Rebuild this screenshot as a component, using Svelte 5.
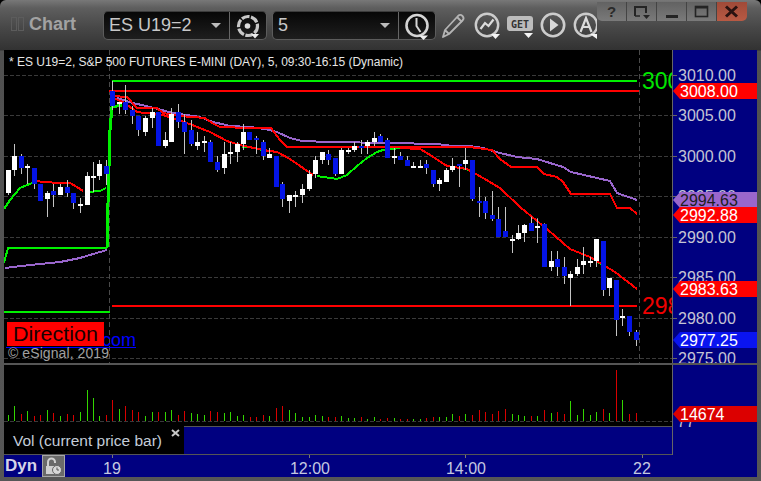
<script>
  const conv = (rows, x0, y0) =>
    rows.map(([x, wt, bt, bb, wb, k]) => ({
      x: Math.round(x0 + x / 3),
      wt: y0 + wt / 3,
      bt: Math.round(y0 + bt / 3),
      bb: Math.round(y0 + bb / 3),
      wb: y0 + wb / 3,
      k
    }));
  const candles = [
    ...conv([
      [25,300,300,370,375,'w'],[43,222,258,300,318,'w'],[64,252,258,294,312,'b'],[82,282,288,294,342,'w'],
      [103,294,294,342,357,'b'],[121,342,342,393,393,'b'],[142,363,369,387,441,'w'],[160,342,363,375,411,'b'],
      [181,342,351,375,375,'w'],[202,330,351,369,381,'b'],[220,369,369,399,417,'b'],[241,384,402,408,429,'w'],
      [260,306,318,405,405,'w'],[280,276,318,324,366,'w'],[298,270,282,318,330,'w'],[319,270,288,312,345,'b'],
      [337,33,63,108,120,'b'],[358,96,96,102,132,'w'],[376,45,96,120,132,'b'],[397,108,120,138,162,'b'],
      [415,138,138,180,198,'b'],[436,138,144,186,198,'w'],[457,114,126,144,174,'w'],[475,126,126,228,228,'b'],
      [496,186,210,228,234,'w'],[514,114,132,216,216,'w'],[535,102,126,156,174,'b'],[553,132,156,186,252,'b'],
      [574,150,180,222,228,'b'],[592,186,216,228,240,'w'],[613,198,213,219,246,'w'],[631,210,216,276,276,'b'],
      [652,258,276,300,306,'b'],[673,216,252,294,312,'w'],[691,216,246,252,282,'w'],[712,216,222,246,276,'w'],
      [730,162,186,222,240,'w'],[748,186,186,210,210,'b']
    ], 0, 70),
    ...conv([
      [18,198,204,210,252,'b'],[40,210,216,258,270,'b'],[58,234,252,264,264,'w'],[79,258,258,351,351,'b'],
      [97,336,342,387,411,'b'],[118,375,375,393,429,'w'],[136,363,375,381,411,'w'],[157,342,357,375,399,'w'],
      [178,300,312,357,363,'w'],[196,258,270,312,324,'w'],[217,246,246,270,282,'w'],[235,240,252,270,285,'b'],
      [256,264,264,312,318,'b'],[274,234,240,312,312,'w'],[295,234,240,246,252,'w'],[313,216,228,240,246,'w'],
      [334,210,228,234,252,'b'],[352,210,216,228,252,'w'],[373,186,204,216,228,'w'],[391,192,198,216,216,'b'],
      [412,204,210,264,264,'b'],[433,234,258,264,282,'w'],[451,246,258,270,270,'b'],[472,258,270,288,288,'b'],
      [490,276,288,294,294,'w'],[511,270,288,294,294,'w'],[529,270,282,294,312,'b'],[550,300,300,342,351,'b'],
      [568,324,330,342,363,'w'],[589,294,300,336,336,'w'],[607,264,288,300,306,'w'],[628,282,282,288,351,'b'],
      [646,234,270,282,300,'w'],[667,270,270,387,393,'b'],[688,351,393,399,441,'b'],[706,381,393,429,447,'b'],
      [727,363,435,447,453,'b'],[745,411,447,501,501,'b']
    ], 250, 70),
    ...conv([
      [15,-54,18,36,36,'b'],[35,30,42,48,84,'w'],[55,0,24,42,45,'w'],[73,-3,0,24,51,'w'],[94,-25,-5,18,18,'b'],
      [112,-20,3,9,54,'w'],[133,-5,-3,126,126,'b'],[154,78,108,126,138,'w'],[172,78,102,126,153,'b'],
      [193,96,126,153,177,'b'],[211,138,147,159,243,'w'],[232,102,126,147,153,'w'],[250,66,108,120,147,'w'],
      [271,96,108,114,126,'w'],[289,42,42,108,126,'w'],[310,48,48,195,213,'b'],[328,159,159,190,213,'w'],
      [349,165,165,285,333,'b'],[367,252,273,279,303,'w'],[388,273,273,321,333,'b'],[409,315,321,345,363,'b']
    ], 500, 225)
  ];

  const volRows = (rows, x0) => rows.map(([x, h, k]) => ({ x: Math.round(x0 + x / 3), h: h / 3, k }));
  const vols = [
    ...volRows([
      [25,18,'g'],[43,45,'g'],[64,21,'r'],[82,30,'g'],[103,15,'r'],[121,18,'r'],[142,33,'g'],[160,24,'r'],
      [181,15,'g'],[202,21,'r'],[220,18,'r'],[241,27,'g'],[260,93,'g'],[280,69,'g'],[298,15,'g'],[319,18,'r'],
      [337,63,'r'],[358,36,'g'],[376,45,'r'],[397,33,'r'],[415,27,'r'],[436,15,'g'],[457,27,'g'],[475,27,'r'],
      [496,27,'g'],[514,33,'g'],[535,18,'r'],[553,30,'r'],[574,24,'g'],[592,21,'g'],[613,18,'g'],[631,30,'r'],
      [652,27,'r'],[673,24,'g'],[691,27,'g'],[712,15,'g'],[730,18,'g']
    ], 0),
    ...volRows([
      [0,12,'r'],[18,12,'r'],[40,18,'r'],[58,15,'g'],[79,39,'r'],[97,45,'r'],[118,33,'g'],[136,24,'g'],[157,12,'g'],
      [178,12,'g'],[196,18,'g'],[217,15,'g'],[235,12,'r'],[256,12,'r'],[274,15,'g'],[295,9,'g'],[313,9,'g'],
      [334,12,'r'],[352,6,'g'],[373,12,'g'],[391,6,'r'],[412,9,'r'],[433,9,'g'],[451,6,'r'],[472,6,'r'],[490,6,'g'],
      [511,6,'g'],[529,9,'r'],[550,12,'r'],[568,12,'g'],[589,12,'g'],[607,21,'g'],[628,15,'r'],[646,21,'g'],
      [667,18,'r'],[688,33,'r'],[706,27,'r'],[727,21,'r'],[745,30,'r']
    ], 250),
    ...volRows([
      [16,36,'r'],[35,21,'g'],[55,18,'g'],[73,15,'g'],[94,15,'r'],[112,15,'g'],[133,33,'r'],[154,24,'g'],[172,27,'r'],
      [193,21,'r'],[211,60,'g'],[232,18,'g'],[250,36,'g'],[271,18,'g'],[289,27,'g'],[310,36,'r'],[328,24,'g'],
      [349,153,'r'],[367,63,'g'],[388,21,'r'],[409,24,'r']
    ], 500)
  ];

  const grid = [75, 115, 156, 196, 237, 277, 318, 358];
  const axis = [
    ['3010.00', 75], ['3005.00', 115], ['3000.00', 156], ['2995.00', 196],
    ['2990.00', 237], ['2985.00', 277], ['2980.00', 318], ['2975.00', 358]
  ];
  const tags = [
    { t: '3008.00', y: 91, c: '#ff0000', f: '#ffffff' },
    { t: '2994.63', y: 200, c: '#9966cc', f: '#1c1c1c' },
    { t: '2992.88', y: 215, c: '#ff0000', f: '#ffffff' },
    { t: '2983.63', y: 289, c: '#ff0000', f: '#ffffff' },
    { t: '2977.25', y: 340, c: '#0a14f0', f: '#ffffff' }
  ];
  const tagPts = (y) => `673,${y} 680,${y - 8} 757,${y - 8} 757,${y + 8} 680,${y + 8}`;

  const purpleA = '5,268 30,265 60,262 80,258 100,252 107,250';
  const purpleB = '117,98 133,103 150,107 173,113 200,117 213,122 230,126 250,127 265,129 277,132 290,138 302,141 330,142 390,143 437,144 453,146 470,146 483,148 500,153 517,157 537,159 563,167 571,172 610,181 617,193 637,200';
  const greenFlat = '4,263 8,248 107,248';
  const greenSteep = '107,248 108,203 110,130 112,107 122,105';
  const greenPieces = [
    '4,209 10,200 20,188 32,183',
    '88,192 100,191 106,188',
    '242,147 250,147 262,150',
    '317,176 337,179 347,175 357,166 367,158 377,152 383,150 400,148',
    '463,169 471,170',
    '597,262 601,264'
  ];
  const redTop = '113,96 127,97 137,108 157,108 163,113 180,116 205,118 212,123 220,127 250,128 271,128 280,140 287,147 393,147 470,147 477,148 492,150 500,159 511,167 537,167 544,174 557,177 563,182 571,194 610,194 617,208 630,208 637,214';
  const redLow = '113,98 123,102 137,112 163,115 187,123 210,132 227,141 240,145 263,150 277,152 290,159 313,175';
  const redLow2 = '400,148 420,149 427,153 447,166 467,169 483,178 500,188 520,207 548,230 570,249 590,257 615,272 637,289';
  const redLeft = '32,181 47,182 57,183 70,183 77,187 83,191';
</script>

<div class="window">
  <header class="titlebar">
    <div class="brand">
      <span class="grip"></span><span class="grip"></span>
      <span class="brand-name">Chart</span>
    </div>

    <div class="pill">
      <span class="pill-text">ES U19=2</span>
      <span class="caret"></span>
      <span class="pill-btn">
        <svg width="30" height="30" viewBox="0 0 30 30" aria-hidden="true">
          <circle cx="15" cy="15" r="9.5" fill="none" stroke="#c8c8c8" stroke-width="3.2" stroke-dasharray="8 1.5"/>
          <circle cx="14.500" cy="15" r="2.800" fill="#dcdcdc"/>
          <path d="M18 23h8l-4 4.500z" fill="#ececec"/>
        </svg>
      </span>
    </div>

    <div class="pill second">
      <span class="pill-text">5</span>
      <span class="caret"></span>
      <span class="pill-btn">
        <svg width="30" height="30" viewBox="0 0 30 30" aria-hidden="true">
          <circle cx="15" cy="14.500" r="10.500" fill="none" stroke="#d4d4d4" stroke-width="2.600"/>
          <path d="M14.500 7v8l4 6" fill="none" stroke="#d4d4d4" stroke-width="2"/>
          <path d="M17 24.500h9l-4.500 4.500z" fill="#f0f0f0"/>
        </svg>
      </span>
    </div>

    <div class="tools">
      <svg width="26" height="28" viewBox="0 0 26 28" aria-hidden="true">
        <path d="M2 26l2-7L17 5c1.500-1.500 3-1.500 4.500 0s1.500 3 0 4.500L8 23z M4 19l4 4" fill="none" stroke="#b4b4b4" stroke-width="1.800" stroke-linejoin="round"/>
        <path d="M16 6l5 5" stroke="#b4b4b4" stroke-width="1.800"/>
      </svg>
      <svg width="26" height="28" viewBox="0 0 26 28" aria-hidden="true">
        <circle cx="13" cy="14" r="11.200" fill="none" stroke="#cccccc" stroke-width="2.400"/>
        <path d="M6.500 18l4.500-6 3.500 3 5-6.500" fill="none" stroke="#dcdcdc" stroke-width="2.200"/>
        <path d="M17 23h9l-4.500 5z" fill="#f4f4f4"/>
      </svg>
      <svg width="26" height="28" viewBox="0 0 26 28" aria-hidden="true">
        <rect x="0" y="5" width="26" height="15" rx="3" fill="#bcbcbc"/>
        <text x="13" y="16.500" class="get">GET</text>
        <path d="M17 22h9l-4.500 5z" fill="#f4f4f4"/>
      </svg>
      <svg width="26" height="28" viewBox="0 0 26 28" aria-hidden="true">
        <circle cx="13" cy="14" r="11.200" fill="none" stroke="#cccccc" stroke-width="2.600"/>
        <path d="M10 7.500l8.500 6.500-8.500 6.500z" fill="#d8d8d8"/>
      </svg>
      <svg width="24" height="28" viewBox="0 0 24 28" aria-hidden="true">
        <circle cx="13" cy="14" r="11.200" fill="none" stroke="#cccccc" stroke-width="2.400"/>
        <path d="M7.500 21l5.500-14 5.500 14M9.500 16h7" fill="none" stroke="#dcdcdc" stroke-width="2.200"/>
        <path d="M17 23h7v5z" fill="#f4f4f4"/>
      </svg>
    </div>

    <div class="winctl">
      <span class="wbtn q">?</span>
      <span class="wbtn">
        <svg width="20" height="16" viewBox="0 0 20 16" aria-hidden="true">
          <path d="M3 12V3h11v6" fill="none" stroke="#242424" stroke-width="2"/>
          <path d="M3 12h5" stroke="#242424" stroke-width="1.500"/>
          <path d="M11 11h7l-3.500 4z" fill="#242424"/>
        </svg>
      </span>
      <span class="wbtn">
        <svg width="20" height="16" viewBox="0 0 20 16" aria-hidden="true"><path d="M4 12.500h12" stroke="#242424" stroke-width="3"/></svg>
      </span>
      <span class="wbtn">
        <svg width="20" height="16" viewBox="0 0 20 16" aria-hidden="true"><rect x="3.500" y="2.500" width="12" height="10" fill="none" stroke="#242424" stroke-width="1.600"/><path d="M3.500 3.500h12" stroke="#242424" stroke-width="2"/></svg>
      </span>
      <span class="wbtn close">
        <svg width="20" height="16" viewBox="0 0 20 16" aria-hidden="true"><path d="M4 2.500l11 10M15 2.500l-11 10" stroke="#2a1210" stroke-width="3"/></svg>
      </span>
    </div>
  </header>

  <section class="row-plot">
    <div class="plot">
      <svg class="plot-svg" width="668" height="313" viewBox="4 50 668 313">
        {#each grid as y}
          <line x1="4" x2="672" y1={y + 0.5} y2={y + 0.5} class="gridline"/>
        {/each}
        <line x1="109.500" x2="109.500" y1="50" y2="363" class="vline"/>
        <line x1="639.500" x2="639.500" y1="50" y2="363" class="vline"/>

        <line x1="4" x2="110" y1="312" y2="312" stroke="#00f000" stroke-width="2"/>
        <line x1="112" x2="637" y1="81" y2="81" stroke="#00f000" stroke-width="2"/>
        <line x1="109" x2="639" y1="91" y2="91" stroke="#ff0000" stroke-width="2"/>
        <line x1="112" x2="637" y1="306" y2="306" stroke="#ff0000" stroke-width="2"/>

        <polyline points={purpleA} class="ma purple"/>
        <polyline points={purpleB} class="ma purple"/>
        <polyline points={greenFlat} class="ma green"/>
        <polyline points={greenSteep} class="ma green thick"/>
        {#each greenPieces as p}
          <polyline points={p} class="ma green"/>
        {/each}
        <polyline points={redLeft} class="ma red"/>
        <polyline points={redTop} class="ma red"/>
        <polyline points={redLow} class="ma red"/>
        <polyline points={redLow2} class="ma red"/>

        {#each candles as c}
          <line x1={c.x + 0.5} x2={c.x + 0.5} y1={c.wt} y2={c.wb} class="wick"/>
          <rect x={c.x - 2} y={c.bt} width="5" height={Math.max(c.bb - c.bt, 2)} fill={c.k === 'w' ? '#ffffff' : '#0414e6'}/>
        {/each}

        <text x="9" y="66" class="title-text" textLength="394" lengthAdjust="spacing">* ES U19=2, S&amp;P 500 FUTURES E-MINI (DAY), 5, 09:30-16:15 (Dynamic)</text>
        <text x="642" y="89" class="big green-t">300</text>
        <text x="642" y="314" class="big red-t">298</text>

        <text x="97" y="346" class="com">.com</text>
        <line x1="6" x2="136" y1="347.500" y2="347.500" stroke="#0000ff" stroke-width="1"/>
        <rect x="7" y="322" width="97" height="24" fill="#ff0000"/>
        <text x="13" y="341" class="direction" textLength="85" lengthAdjust="spacingAndGlyphs">Direction</text>
        <text x="8" y="358" class="copy" textLength="101" lengthAdjust="spacing">© eSignal, 2019</text>
      </svg>
    </div>
    <div class="axis">
      <svg width="84" height="313" viewBox="673 50 84 313">
        {#each axis as [t, y]}
          <line x1="673" x2="677" y1={y + 0.5} y2={y + 0.5} stroke="#666666"/>
          <text x="678" y={y + 6} class="axis-text">{t}</text>
        {/each}
        {#each tags as tag}
          <polygon points={tagPts(tag.y)} fill={tag.c}/>
          <text x="680" y={tag.y + 6} class="axis-text" style:fill={tag.f}>{tag.t}</text>
        {/each}
      </svg>
    </div>
  </section>

  <div class="sep"></div>

  <section class="row-vol">
    <div class="vol-col">
      <svg class="vol-svg" width="668" height="61" viewBox="4 365 668 61">
        <line x1="4" x2="672" y1="421.500" y2="421.500" class="gridline"/>
        {#each vols as v}
          <rect x={v.x} y={421 - v.h} width="1" height={v.h} fill={v.k === 'g' ? '#33d600' : '#d80000'}/>
        {/each}
      </svg>
      <div class="legend-row">
        <div class="legend">
          <span class="legend-text">Vol (current price bar)</span>
          <svg class="legend-x" width="9" height="8" viewBox="0 0 9 8" aria-hidden="true"><path d="M1 1l7 6M8 1L1 7" stroke="#c8c8c8" stroke-width="2"/></svg>
        </div>
        <div class="legend-blank"></div>
      </div>
    </div>
    <div class="vol-axis">
      <svg width="84" height="89" viewBox="673 365 84 89">
        <text x="677" y="427" class="axis-text">77</text>
        <polygon points={tagPts(414)} fill="#dc0000"/>
        <text x="680" y="420" class="axis-text tag-white">14674</text>
      </svg>
    </div>
  </section>

  <footer class="timebar">
    <span class="dyn">Dyn</span>
    <span class="lock">
      <svg width="21" height="21" viewBox="0 0 21 21" aria-hidden="true">
        <path d="M5 10V6a3.500 3.500 0 0 1 7 0v1" fill="none" stroke="#d0d0d0" stroke-width="2"/>
        <rect x="3" y="10" width="10" height="8" fill="#d0d0d0"/>
        <circle cx="14" cy="14" r="4.500" fill="#d8d8d8" stroke="#666" stroke-width="1"/>
        <path d="M14 11.500V14h2" fill="none" stroke="#555" stroke-width="1"/>
      </svg>
    </span>
    <svg class="time-svg" width="692" height="22" viewBox="65 455 692 22">
      <line x1="112.500" x2="112.500" y1="455" y2="458" stroke="#777"/>
      <line x1="309.500" x2="309.500" y1="455" y2="458" stroke="#777"/>
      <line x1="465.500" x2="465.500" y1="455" y2="458" stroke="#777"/>
      <line x1="642.500" x2="642.500" y1="455" y2="458" stroke="#777"/>
      <text x="112" y="474" class="time-text">19</text>
      <text x="310" y="474" class="time-text">12:00</text>
      <text x="466" y="474" class="time-text">14:00</text>
      <text x="642" y="474" class="time-text">22</text>
    </svg>
  </footer>
</div>

<style>
  :global(body) {
    margin: 0;
    background: #000;
  }
  .window {
    box-sizing: border-box;
    width: 761px;
    height: 481px;
    overflow: hidden;
    padding: 0 4px 4px;
    border-radius: 6px 6px 0 0;
    background: linear-gradient(#787878 0, #5e5e5e 8px, #474747 28px, #323232 50px, #505050 51px, #565656 100%);
    font-family: "Liberation Sans", Arial, sans-serif;
    display: flex;
    flex-direction: column;
  }
  svg {
    display: block;
  }
  .titlebar {
    height: 50px;
    flex: none;
    display: flex;
    align-items: flex-start;
  }
  .brand {
    width: 99px;
    height: 50px;
    flex: none;
    display: flex;
    align-items: center;
    padding: 0 0 0 7px;
    box-sizing: border-box;
    gap: 1px;
  }
  .grip {
    width: 6px;
    height: 14px;
    border: 1px solid #5c5c5c;
    box-sizing: border-box;
    margin-top: -2px;
  }
  .brand-name {
    margin: -2px 0 0 4px;
    font-size: 18px;
    font-weight: bold;
    color: #a2a2a2;
  }
  .pill {
    box-sizing: border-box;
    width: 164px;
    height: 29px;
    flex: none;
    margin: 11px 5px 0 0;
    display: flex;
    align-items: center;
    background: linear-gradient(#070707, #1e1e1e);
    border: 1px solid #5c5c5c;
    border-top-color: #3c3c3c;
    border-radius: 5px;
  }
  .pill.second {
    margin-right: 0;
  }
  .pill-text {
    margin-left: 5px;
    font-size: 18px;
    color: #c8c8c8;
    flex: 1;
  }
  .caret {
    width: 0;
    height: 0;
    border-left: 5px solid transparent;
    border-right: 5px solid transparent;
    border-top: 5px solid #bcbcbc;
    margin-right: 8px;
  }
  .pill-btn {
    width: 37px;
    height: 27px;
    border-left: 1px solid #666;
    box-sizing: border-box;
    display: flex;
    align-items: center;
    justify-content: center;
  }
  .tools {
    display: flex;
    gap: 7px;
    margin: 11px 0 0 5px;
    width: 156px;
    flex: none;
  }
  .get {
    font-size: 10px;
    font-weight: bold;
    fill: #333;
    text-anchor: middle;
    font-family: "DejaVu Sans Mono", monospace;
  }
  .winctl {
    margin-top: 2px;
    display: flex;
    height: 19px;
    border-radius: 0 0 5px 5px;
    overflow: hidden;
    flex: none;
  }
  .wbtn {
    width: 30px;
    height: 19px;
    box-sizing: border-box;
    display: flex;
    align-items: center;
    justify-content: center;
    background: linear-gradient(#626262, #7a7a7a);
    border-right: 1px solid #444;
  }
  .wbtn.q {
    font-size: 15px;
    font-weight: bold;
    color: #2a2a2a;
  }
  .wbtn.close {
    background: linear-gradient(#a04a38, #b85a44);
    border-right: none;
  }
  .row-plot {
    display: flex;
    flex: none;
    height: 313px;
  }
  .plot {
    width: 668px;
    height: 313px;
    background: #000;
    flex: none;
    border-right: 1px solid #666;
  }
  .plot-svg, .vol-svg {
    overflow: hidden;
  }
  .axis, .vol-axis {
    width: 84px;
    background: #000080;
    flex: none;
  }
  .sep {
    flex: none;
    height: 2px;
    background: #555;
  }
  .row-vol {
    display: flex;
    flex: none;
    height: 90px;
  }
  .vol-col {
    width: 668px;
    flex: none;
    display: flex;
    flex-direction: column;
    border-right: 1px solid #666;
  }
  .vol-svg {
    background: #000;
    flex: none;
  }
  .legend-row {
    flex: none;
    height: 29px;
    box-sizing: border-box;
    display: flex;
    border-bottom: 1px solid #555;
  }
  .legend {
    width: 180px;
    background: #000;
    position: relative;
    display: flex;
    align-items: center;
    padding-left: 9px;
    box-sizing: border-box;
  }
  .legend-text {
    font-size: 15.500px;
    color: #c4ccd8;
    padding-top: 2px;
  }
  .legend-x {
    position: absolute;
    left: 167px;
    top: 3px;
  }
  .legend-blank {
    flex: 1;
    background: #000080;
    border-top: 1px solid #555;
  }
  .timebar {
    flex: none;
    height: 22px;
    background: #000080;
    display: flex;
    align-items: stretch;
  }
  .dyn {
    width: 38px;
    font-size: 17px;
    font-weight: bold;
    color: #d4d4e8;
    padding-left: 1px;
    box-sizing: border-box;
    line-height: 22px;
  }
  .lock {
    width: 23px;
    box-sizing: border-box;
    background: #6a6a6a;
    border: 1px solid #a8a8a8;
    display: flex;
    align-items: center;
    justify-content: center;
  }
  .gridline {
    stroke: #3a3a3a;
    stroke-width: 1;
    stroke-dasharray: 4 2;
  }
  .vline {
    stroke: #4a4a4a;
    stroke-width: 1;
    stroke-dasharray: 5 3;
  }
  .ma {
    fill: none;
    stroke-width: 2;
    stroke-linejoin: round;
    shape-rendering: crispEdges;
  }
  .purple { stroke: #9966cc; }
  .green { stroke: #00f000; }
  .thick { stroke-width: 3; }
  .red { stroke: #ff0000; }
  .wick {
    stroke: #c4c4c4;
    stroke-width: 1;
  }
  .title-text {
    font-size: 12px;
    fill: #e6e6e6;
  }
  .big {
    font-size: 23px;
  }
  .green-t { fill: #00e600; }
  .red-t { fill: #f00000; }
  .com {
    font-size: 18px;
    fill: #0000ff;
  }
  .direction {
    font-size: 21px;
    fill: #1a0000;
  }
  .copy {
    font-size: 14px;
    fill: #a0a0a0;
  }
  .axis-text {
    font-size: 16px;
    fill: #c4c4d4;
  }
  .tag-white {
    fill: #ffffff;
  }
  .time-text {
    font-size: 16px;
    fill: #c4c8e0;
    text-anchor: middle;
  }
</style>
